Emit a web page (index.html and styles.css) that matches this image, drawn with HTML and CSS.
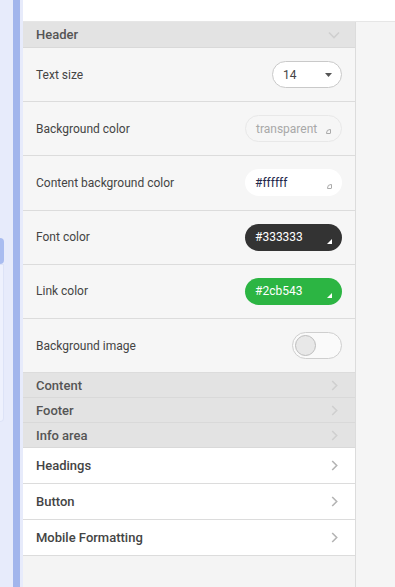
FILE: index.html
```html
<!DOCTYPE html>
<html lang="en">
<head>
    <meta charset="UTF-8">
    <title>Header settings</title>
    <link rel="stylesheet" href="styles.css">
</head>
<body>
    <div class="rail">
        <div class="rail-tab"></div>
        <div class="rail-card"></div>
    </div>
    <div class="rail-bar"></div>
    <div class="rail-gap"></div>

    <div class="main">
        <div class="topbar"></div>
        <div class="workspace">
            <div class="panel">
                <div class="section-head open">
                    <span>Header</span>
                    <svg class="chev" width="12" height="8" viewBox="0 0 12 8"><path d="M1 1.5l5 5 5-5" fill="none" stroke="#cfcfcf" stroke-width="1.6"/></svg>
                </div>

                <div class="row">
                    <span class="label">Text size</span>
                    <div class="select">
                        <span>14</span>
                        <svg width="7" height="4" viewBox="0 0 7 4"><path d="M0 0h7L3.5 4z" fill="#555"/></svg>
                    </div>
                </div>

                <div class="row">
                    <span class="label">Background color</span>
                    <div class="color color-empty">
                        <span>transparent</span>
                        <i class="grip"></i>
                    </div>
                </div>

                <div class="row">
                    <span class="label">Content background color</span>
                    <div class="color color-white">
                        <span>#ffffff</span>
                        <i class="grip"></i>
                    </div>
                </div>

                <div class="row">
                    <span class="label">Font color</span>
                    <div class="color color-dark">
                        <span>#333333</span>
                        <i class="grip grip-solid"></i>
                    </div>
                </div>

                <div class="row">
                    <span class="label">Link color</span>
                    <div class="color color-green">
                        <span>#2cb543</span>
                        <i class="grip grip-solid"></i>
                    </div>
                </div>

                <div class="row">
                    <span class="label">Background image</span>
                    <div class="toggle"><span class="knob"></span></div>
                </div>

                <div class="section-head">
                    <span>Content</span>
                    <svg class="chev" width="7" height="11" viewBox="0 0 7 11"><path d="M1.2 1l4.5 4.5-4.5 4.5" fill="none" stroke="#cfcfcf" stroke-width="1.6"/></svg>
                </div>
                <div class="section-head">
                    <span>Footer</span>
                    <svg class="chev" width="7" height="11" viewBox="0 0 7 11"><path d="M1.2 1l4.5 4.5-4.5 4.5" fill="none" stroke="#cfcfcf" stroke-width="1.6"/></svg>
                </div>
                <div class="section-head">
                    <span>Info area</span>
                    <svg class="chev" width="7" height="11" viewBox="0 0 7 11"><path d="M1.2 1l4.5 4.5-4.5 4.5" fill="none" stroke="#cfcfcf" stroke-width="1.6"/></svg>
                </div>

                <div class="link-row">
                    <span>Headings</span>
                    <svg class="chev" width="7" height="11" viewBox="0 0 7 11"><path d="M1.2 1l4.5 4.5-4.5 4.5" fill="none" stroke="#b4b4b4" stroke-width="1.6"/></svg>
                </div>
                <div class="link-row">
                    <span>Button</span>
                    <svg class="chev" width="7" height="11" viewBox="0 0 7 11"><path d="M1.2 1l4.5 4.5-4.5 4.5" fill="none" stroke="#b4b4b4" stroke-width="1.6"/></svg>
                </div>
                <div class="link-row">
                    <span>Mobile Formatting</span>
                    <svg class="chev" width="7" height="11" viewBox="0 0 7 11"><path d="M1.2 1l4.5 4.5-4.5 4.5" fill="none" stroke="#b4b4b4" stroke-width="1.6"/></svg>
                </div>
            </div>
            <div class="fill"></div>
        </div>
    </div>
</body>
</html>
```

FILE: styles.css
```css
:root {
    --rail: #e7ebfb;
    --rail-blue: #a2b5ec;
    --row-bg: #f6f6f6;
    --head-bg: #e3e3e3;
    --line: #dcdcdc;
    --text: #444;
}

html, body {
    height: 100%;
}

body {
    margin: 0;
    display: flex;
    font-family: Roboto, "Liberation Sans", sans-serif;
    color: var(--text);
    background: #f4f4f4;
}

.rail {
    width: 13px;
    background: var(--rail);
    padding-top: 238px;
    box-sizing: border-box;
}

.rail-tab {
    width: 4px;
    height: 26px;
    background: #a9bcf0;
    border-radius: 0 5px 5px 0;
}

.rail-card {
    width: 4px;
    height: 158px;
    background: #eef1fd;
    border: 1px solid #dde3f7;
    border-left: none;
    border-radius: 0 0 5px 0;
    box-sizing: border-box;
}

.rail-bar {
    width: 7px;
    background: var(--rail-blue);
}

.rail-gap {
    width: 3px;
    background: var(--rail);
}

.main {
    flex: 1;
    display: flex;
    flex-direction: column;
}

.topbar {
    height: 21px;
    background: #fff;
    border-bottom: 1px solid #e6e6e6;
}

.workspace {
    flex: 1;
    display: flex;
}

.panel {
    width: 332px;
    border-right: 1px solid var(--line);
    background: #f4f4f4;
}

.fill {
    flex: 1;
    background: #f5f5f5;
}

.section-head {
    height: 24px;
    padding: 0 17px 0 13px;
    display: flex;
    align-items: center;
    justify-content: space-between;
    background: var(--head-bg);
    border-bottom: 1px solid #d9d9d9;
    font-size: 13px;
    font-weight: 500;
    color: #555;
}

.section-head.open {
    height: 25px;
    padding-right: 15px;
}

.section-head .chev {
    display: block;
}

.row {
    height: 53.2px;
    padding: 0 13px;
    display: flex;
    align-items: center;
    justify-content: space-between;
    background: var(--row-bg);
    border-bottom: 1px solid var(--line);
}

.label {
    font-size: 12px;
    color: var(--text);
}

.select {
    width: 70px;
    height: 27px;
    box-sizing: border-box;
    border: 1px solid #c9c9c9;
    border-radius: 14px;
    background: #fff;
    display: flex;
    align-items: center;
    justify-content: space-between;
    padding: 0 9px 0 10px;
    font-size: 12px;
    color: #444;
}

.color {
    position: relative;
    width: 97px;
    height: 27px;
    box-sizing: border-box;
    border-radius: 14px;
    display: flex;
    align-items: center;
    padding-left: 10px;
    font-size: 12px;
}

.color-empty {
    border: 1px solid #e8e8e8;
    background: #f6f6f6;
    color: #a8a8a8;
}

.color-white {
    background: #fff;
    color: #22274a;
}

.color-dark {
    background: #333;
    color: #fff;
}

.color-green {
    background: #2cb543;
    color: #fff;
}

.grip {
    position: absolute;
    right: 10px;
    bottom: 7px;
    width: 5px;
    height: 5px;
    border: 1px solid #aaa;
    border-radius: 4px 0 1px 0;
    box-sizing: border-box;
}

.grip-solid {
    border: none;
    width: 0;
    height: 0;
    border-radius: 0;
    border-left: 5px solid transparent;
    border-bottom: 5px solid #fff;
}

.toggle {
    width: 50px;
    height: 27px;
    box-sizing: border-box;
    border: 1px solid #cfcfcf;
    border-radius: 14px;
    background: #fafafa;
    display: flex;
    align-items: center;
    padding-left: 2px;
}

.knob {
    width: 21px;
    height: 21px;
    box-sizing: border-box;
    border-radius: 50%;
    border: 1px solid #bdbdbd;
    background: #e8e8e8;
}

.link-row {
    height: 35px;
    padding: 0 17px 0 13px;
    display: flex;
    align-items: center;
    justify-content: space-between;
    background: #fff;
    border-bottom: 1px solid var(--line);
    font-size: 13px;
    font-weight: 500;
    color: #444;
}
```
